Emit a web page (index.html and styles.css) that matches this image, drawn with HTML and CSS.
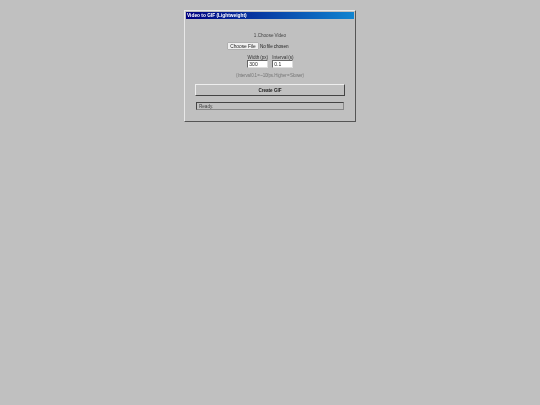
FILE: index.html
```html
<!DOCTYPE html>
<html lang="en">
  <head>
    <meta charset="UTF-8" />
    <title>Video to GIF (Lightweight)</title>
    <link rel="stylesheet" href="styles.css">
  </head>
  <body>
    <div class="window">
      <div class="title-bar">Video to GIF (Lightweight)</div>
      <div class="content">
        <p class="step">1.Choose Video</p>
        <div class="file-row">
          <input type="file" id="videoFile" accept="video/*" />
        </div>
        <div class="fields">
          <div class="field">
            <label for="width">Width (px)</label>
            <input type="text" id="width" value="300" />
          </div>
          <div class="field">
            <label for="interval">Interval (s)</label>
            <input type="text" id="interval" value="0.1" />
          </div>
        </div>
        <p class="hint">(Interval 0.1 = ~10fps. Higher = Slower)</p>
        <button type="button" class="create">Create GIF</button>
        <div class="status">Ready.</div>
      </div>
    </div>
  </body>
</html>
```

FILE: styles.css
```css
* {
  margin: 0;
  padding: 0;
  box-sizing: border-box;
}
body {
  background-color: #c0c0c0;
  font-family: "Liberation Sans", Arial, sans-serif;
  font-size: 4.6px;
  color: #222;
}
.window {
  width: 172px;
  height: 112px;
  margin: 10px auto 0;
  padding: 1px;
  background: #c0c0c0;
  border: 1px solid;
  border-color: #e8e8e8 #555 #555 #e8e8e8;
  filter: blur(0.25px);
}
.title-bar {
  height: 7px;
  padding-left: 1px;
  background: linear-gradient(to right, #000080, #1084d0);
  color: #fff;
  font-size: 4.8px;
  font-weight: bold;
  line-height: 7px;
}
.content {
  padding: 14px 9px 0;
}
.step {
  text-align: center;
  line-height: 6px;
  color: #444;
  word-spacing: -0.3px;
}
.file-row {
  display: flex;
  margin: 3px 0 0 32px;
  height: 8px;
}
.file-row input {
  font-family: inherit;
  font-size: 4.6px;
  color: #222;
  word-spacing: -0.3px;
}
.file-row input::file-selector-button {
  width: 32px;
  height: 8px;
  margin-right: 1px;
  padding: 0;
  font-family: inherit;
  font-size: 4.8px;
  color: #222;
  background: #f0f0f0;
  border: 1px solid #b0b0b0;
  border-radius: 1px;
}
.fields {
  display: flex;
  justify-content: center;
  gap: 4px;
  margin-top: 5px;
  padding-left: 1px;
}
.field {
  display: flex;
  flex-direction: column;
}
.field label {
  line-height: 5px;
  text-align: center;
  color: #333;
  word-spacing: -0.4px;
}
.field input {
  width: 21px;
  height: 8px;
  padding-left: 1px;
  font-family: inherit;
  font-size: 5px;
  color: #222;
  background: #fff;
  border: 1px solid;
  border-color: #666 #ddd #ddd #666;
  outline: none;
}
.hint {
  margin-top: 5px;
  text-align: center;
  line-height: 6px;
  color: #777;
  font-size: 4.5px;
  letter-spacing: -0.18px;
  word-spacing: -0.6px;
}
.create {
  display: block;
  width: 150px;
  height: 12px;
  margin-top: 5px;
  font-family: inherit;
  font-size: 4.6px;
  font-weight: bold;
  color: #222;
  background: #c0c0c0;
  border: 1px solid;
  border-color: #eee #444 #444 #eee;
}
.status {
  width: 148px;
  height: 8px;
  margin: 6px 0 0 1px;
  padding-left: 2px;
  line-height: 7px;
  color: #444;
  background: #c0c0c0;
  border: 1px solid;
  border-color: #444 #888 #888 #444;
}
```
